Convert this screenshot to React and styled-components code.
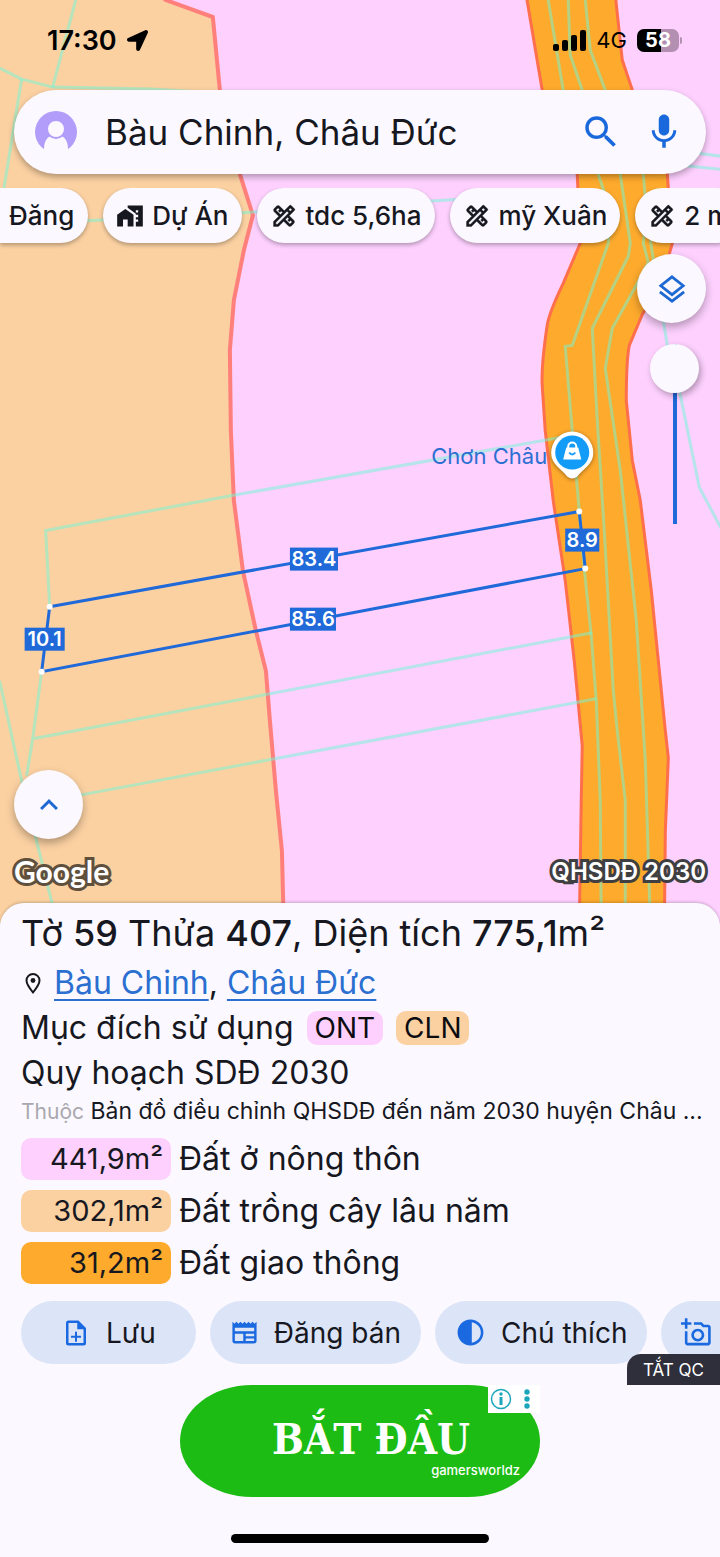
import React, { useState } from "react";
import styled, { createGlobalStyle } from "styled-components";
import { FaLocationArrow } from "react-icons/fa";
import {
  MdContrast,
  MdHomeWork,
  MdKeyboardArrowUp,
  MdMic,
  MdNewspaper,
  MdOutlineAddAPhoto,
  MdOutlineDesignServices,
  MdSearch,
} from "react-icons/md";

const DesignIcon = (props) => <MdOutlineDesignServices {...props} strokeWidth="0.3" />;

const chips = [
  { label: "Đăng", cut: true },
  { label: "Dự Án", icon: MdHomeWork },
  { label: "tdc 5,6ha", icon: DesignIcon },
  { label: "mỹ Xuân", icon: DesignIcon },
  { label: "2 m", icon: DesignIcon },
];

const zones = [
  { area: "441,9m²", name: "Đất ở nông thôn", color: "#fdd0fd" },
  { area: "302,1m²", name: "Đất trồng cây lâu năm", color: "#fbd1a2" },
  { area: "31,2m²", name: "Đất giao thông", color: "#fdaa2d" },
];

const edges = [
  { text: "83.4", x: 290, y: 547, w: 48 },
  { text: "85.6", x: 290, y: 607, w: 46 },
  { text: "8.9", x: 565, y: 528, w: 34 },
  { text: "10.1", x: 25, y: 627, w: 40 },
];

const corners = [
  [50, 606],
  [579, 511],
  [585, 568],
  [42, 671],
];

const FileAddIcon = () => (
  <svg width="30" height="30" viewBox="0 0 24 24" fill="currentColor" aria-hidden="true">
    <path d="M14 2H6a2 2 0 0 0-2 2v16a2 2 0 0 0 2 2h12a2 2 0 0 0 2-2V8zM6 20V4h7v5h5v11z" />
    <path d="M11.2 11h1.6v3.2H16v1.6h-3.2V19h-1.6v-3.2H8v-1.6h3.2z" />
  </svg>
);

const LayersIcon = () => (
  <svg width="28" height="30" viewBox="0 0 30 32" fill="none" stroke="currentColor" strokeWidth="3" aria-hidden="true">
    <path d="M15 3 27 12.500 15 22 3 12.500z" />
    <path d="M2 19 15 29 28 19" />
  </svg>
);

const PinIcon = () => (
  <svg width="24" height="24" viewBox="0 0 24 24" fill="none" stroke="currentColor" strokeWidth="2" aria-hidden="true">
    <path d="M12 21.500C8 16.500 5.500 13 5.500 9.500a6.500 6.500 0 0 1 13 0c0 3.500-2.500 7-6.500 12z" />
    <circle cx="12" cy="9.500" r="2.400" fill="currentColor" stroke="none" />
  </svg>
);

const AvatarIcon = () => (
  <svg width="42" height="42" viewBox="0 0 42 42" aria-hidden="true">
    <circle cx="21" cy="21" r="21" fill="#b29dfa" />
    <path d="M9 43V38c0-7 3-12 7-13h10c4 1 7 6 7 13v5z" fill="#fbf9ff" />
    <circle cx="21" cy="18" r="9" fill="#fbf9ff" stroke="#b29dfa" strokeWidth="2" />
  </svg>
);

const SignalIcon = () => (
  <svg width="33" height="21" viewBox="0 0 33 21" aria-hidden="true">
    <rect x="0" y="14" width="6" height="7" rx="2" />
    <rect x="9" y="10" width="6" height="11" rx="2" />
    <rect x="18" y="5" width="6" height="16" rx="2" />
    <rect x="27" y="0" width="6" height="21" rx="2" />
  </svg>
);

const PlanningMap = () => (
  <MapCanvas viewBox="0 0 720 922" preserveAspectRatio="xMidYMid slice">
    <rect width="720" height="922" fill="#fdd0fe" />
    <path
      d="M-5-5H160L166 0 213 17 220 90 240 174 253 215 244 250 234 300 230 350 231 430 234 500 243 570 256 630 266 670 270 720 276 790 282 850 284 930H-5z"
      fill="#fbd1a2"
      stroke="#ff7f7b"
      strokeWidth="4"
    />
    <path
      d="M526-5 542 90 577 174 580 243 563 283Q549 312 547 325 541 365 542 385L545 430 553 500 565 580 574 660 582 745 581 800 579 930H664L665 830 668 757 665 730 658 660 651 590 640 500 632 460 626 400Q626 360 629 345L642 314 660 285 672 243 667 174 632 90 622 60 615-5z"
      fill="#fdaa2d"
      stroke="#ff6f4c"
      strokeWidth="3"
    />
    <g fill="none" stroke="#70f8d8" strokeOpacity="0.500" strokeWidth="3">
      <path d="M548 0 563 90 598 174 610 210 608 243 572 345 565 346 572 430 579 510 584 568 591 635 596 700 600 800 601 922" />
      <path d="M568 0 570 55 582 90 620 174 630 243 628 256 592 328 597 420 604 530 613 690 617 730 625 800 625 922" />
      <path d="M585 0 590 50 605 90 643 174 646 210 643 243 648 262 636 285 612 328 605 368 620 470 636 620 645 760 650 922" />
      <path d="M650 240 667 345 680 395 699 487 722 530" />
      <path d="M690 152 720 156M680 165 720 169" />
      <path d="M0 68 22 79 53 87 150 89 260 95" />
      <path d="M76 0 53 87M22 79 4 190" />
      <path d="M0 225 250 212 460 199" />
      <path d="M50 606 46 530 232 495 560 437" />
      <path d="M42 671 33 738 27 775M33 738 592 632M60 798 596 698M0 680 22 780 53 905" />
    </g>
    <path d="M50 606 579 511 585 568 42 671z" fill="none" stroke="#1f69d9" strokeWidth="3" />
    {corners.map(([x, y]) => (
      <circle key={x} cx={x} cy={y} r="3" fill="#fff" />
    ))}
    {edges.map((edge) => (
      <g key={edge.text}>
        <rect x={edge.x} y={edge.y} width={edge.w} height="23" fill="#1f69d9" />
        <EdgeText x={edge.x + edge.w / 2} y={edge.y + 18}>
          {edge.text}
        </EdgeText>
      </g>
    ))}
    <PlaceText x="547" y="463">
      Chơn Châu
    </PlaceText>
    <PlacePin>
      <path d="M572 431a21 21 0 0 1 21 22c0 11-11 16-16 23q-5 4-10 0c-5-7-16-12-16-23a21 21 0 0 1 21-22z" fill="#fff" />
      <circle cx="572" cy="452" r="17" fill="#129bf7" />
      <path d="M566 447h12l3 12h-18z" fill="#fff" />
      <path d="M568 448v-2a4 4 0 0 1 8 0v2" fill="none" stroke="#fff" strokeWidth="2" />
      <path d="M569 452q3 4 6 0" fill="none" stroke="#129bf7" strokeWidth="2" />
    </PlacePin>
  </MapCanvas>
);

const App = () => {
  const [query, setQuery] = useState("Bàu Chinh, Châu Đức");
  const [opacity, setOpacity] = useState(100);

  return (
    <Page>
      <GlobalStyle />
      <MapArea>
        <PlanningMap />
        <MapOverlay>
          <StatusBar>
            <Clock>
              17:30 <FaLocationArrow size={21} />
            </Clock>
            <StatusIcons>
              <SignalIcon />
              <span>4G</span>
              <Battery>58</Battery>
            </StatusIcons>
          </StatusBar>

          <SearchBar>
            <IconButton aria-label="Tài khoản">
              <AvatarIcon />
            </IconButton>
            <SearchInput
              aria-label="Tìm kiếm"
              value={query}
              onChange={(e) => setQuery(e.target.value)}
            />
            <IconButton aria-label="Tìm">
              <MdSearch size={42} />
            </IconButton>
            <IconButton aria-label="Giọng nói">
              <MdMic size={42} />
            </IconButton>
          </SearchBar>

          <ChipRow>
            {chips.map(({ label, icon: Icon, cut }) => (
              <Chip key={label} $cut={cut}>
                {Icon && <Icon size={28} />}
                {label}
              </Chip>
            ))}
          </ChipRow>

          <MapTools>
            <RoundButton aria-label="Lớp bản đồ">
              <LayersIcon />
            </RoundButton>
            <OpacitySlider
              type="range"
              aria-label="Độ mờ"
              value={opacity}
              onChange={(e) => setOpacity(Number(e.target.value))}
            />
          </MapTools>

          <MapFooter>
            <RoundButton aria-label="Mở rộng">
              <MdKeyboardArrowUp size={36} />
            </RoundButton>
            <Credits>
              <GoogleMark>Google</GoogleMark>
              <PlanMark>QHSDĐ 2030</PlanMark>
            </Credits>
          </MapFooter>
        </MapOverlay>
      </MapArea>

      <Sheet>
        <Title>
          Tờ <b>59</b> Thửa <b>407</b>, Diện tích <b>775,1</b>m²
        </Title>
        <Line>
          <PinIcon />
          <span>
            <a href="#bau-chinh">Bàu Chinh</a>, <a href="#chau-duc">Châu Đức</a>
          </span>
        </Line>
        <Line>
          Mục đích sử dụng
          <Tag $color="#fdd0fd">ONT</Tag>
          <Tag $color="#fbd1a2">CLN</Tag>
        </Line>
        <Line>Quy hoạch SDĐ 2030</Line>
        <Source>
          <span>Thuộc</span> Bản đồ điều chỉnh QHSDĐ đến năm 2030 huyện Châu ...
        </Source>
        <ZoneList>
          {zones.map((zone) => (
            <Zone key={zone.name}>
              <Area $color={zone.color}>{zone.area}</Area>
              {zone.name}
            </Zone>
          ))}
        </ZoneList>
        <Actions>
          <Action $padding="0 40px">
            <FileAddIcon />
            Lưu
          </Action>
          <Action>
            <MdNewspaper size={29} />
            Đăng bán
          </Action>
          <Action>
            <MdContrast size={31} />
            Chú thích
          </Action>
          <Action $padding="0 120px 0 20px" aria-label="Thêm ảnh">
            <MdOutlineAddAPhoto size={31} />
          </Action>
        </Actions>
        <AdArea>
          <HideAds>TẮT QC</HideAds>
          <AdBox>
            <AdLink href="#ad">
              <AdTitle>BẮT ĐẦU</AdTitle>
              <AdSource>gamersworldz</AdSource>
            </AdLink>
            <AdChoices aria-label="Thông tin quảng cáo">
              <svg width="46" height="22" viewBox="0 0 46 22" fill="#1ba6bb">
                <circle cx="11" cy="11" r="9.500" fill="none" stroke="#1ba6bb" strokeWidth="1.500" />
                <path d="M9.500 9h3v8h-3z" />
                <circle cx="11" cy="6" r="1.700" />
                <circle cx="37" cy="4" r="2.700" />
                <circle cx="37" cy="11" r="2.700" />
                <circle cx="37" cy="18" r="2.700" />
              </svg>
            </AdChoices>
          </AdBox>
        </AdArea>
        <HomeIndicator />
      </Sheet>
    </Page>
  );
};

const GlobalStyle = createGlobalStyle`
  * {
    box-sizing: border-box;
  }
  body {
    margin: 0;
    background: #fbf9ff;
    color: #17181f;
    font-family: Inter, "Liberation Sans", sans-serif;
  }
  button {
    border: none;
    padding: 0;
    font-family: inherit;
    color: inherit;
    cursor: pointer;
  }
`;

const Page = styled.div`
  display: flex;
  flex-direction: column;
  min-height: 100vh;
  overflow: hidden;
`;

const MapArea = styled.main`
  flex: 1;
  display: grid;
  min-width: 0;
  position: relative;
`;

const MapCanvas = styled.svg`
  position: absolute;
  inset: 0;
  width: 100%;
  height: 100%;
`;

const EdgeText = styled.text`
  font-size: 20px;
  font-weight: 600;
  text-anchor: middle;
  fill: #fff;
`;

const PlaceText = styled.text`
  font-size: 22px;
  text-anchor: end;
  fill: #2b6fd1;
`;

const PlacePin = styled.g`
  filter: drop-shadow(0 1px 2px rgba(0, 0, 0, 0.4));
`;

const MapOverlay = styled.div`
  display: flex;
  flex-direction: column;
  min-width: 0;
  position: relative;
  padding-bottom: 34px;
`;

const StatusBar = styled.div`
  display: flex;
  justify-content: space-between;
  align-items: center;
  height: 80px;
  padding: 0 41px 0 47px;
  color: #000;
`;

const Clock = styled.div`
  display: flex;
  align-items: center;
  gap: 10px;
  font-size: 27px;
  font-weight: 600;
`;

const StatusIcons = styled.div`
  display: flex;
  align-items: center;
  gap: 10px;
  font-size: 22px;
`;

const Battery = styled.div`
  position: relative;
  width: 42px;
  height: 23px;
  border-radius: 7px;
  background: linear-gradient(90deg, #000 58%, #b38fb2 58%);
  color: #fff;
  font-size: 20px;
  font-weight: 700;
  line-height: 23px;
  text-align: center;

  &::after {
    content: "";
    position: absolute;
    top: 8px;
    right: -3px;
    width: 2px;
    height: 7px;
    border-radius: 0 2px 2px 0;
    background: #b38fb2;
  }
`;

const SearchBar = styled.div`
  display: flex;
  align-items: center;
  gap: 21px;
  height: 84px;
  margin: 10px 14px 14px;
  padding: 0 21px;
  border-radius: 42px;
  background: #fbf9ff;
  box-shadow: 0 3px 6px rgba(0, 0, 0, 0.3);
`;

const SearchInput = styled.input`
  flex: 1;
  min-width: 0;
  border: none;
  outline: none;
  padding: 0 0 0 7px;
  background: none;
  color: #17181f;
  font-family: inherit;
  font-size: 35px;
`;

const IconButton = styled.button`
  display: flex;
  background: none;
  color: #1a69dc;
`;

const ChipRow = styled.div`
  display: flex;
  gap: 15px;
  height: 66px;
  overflow: hidden;
`;

const Chip = styled.button`
  display: flex;
  flex: none;
  align-items: center;
  gap: 8px;
  height: 55px;
  padding: ${(props) => (props.$cut ? "0 14px 0 9px" : "0 13px")};
  border-radius: ${(props) => (props.$cut ? "0 28px 28px 0" : "28px")};
  background: #fbf9ff;
  box-shadow: 0 2px 4px rgba(0, 0, 0, 0.3);
  font-size: 26px;
  font-weight: 500;

  path[fill="none"] {
    stroke: none;
  }
`;

const MapTools = styled.div`
  display: flex;
  flex-direction: column;
  align-items: flex-end;
  gap: 21px;
  padding-right: 14px;
`;

const RoundButton = styled.button`
  display: flex;
  align-items: center;
  justify-content: center;
  width: 69px;
  height: 69px;
  border-radius: 50%;
  background: #fbf9ff;
  color: #1f69d3;
  box-shadow: 0 4px 8px rgba(0, 0, 0, 0.3);
`;

const OpacitySlider = styled.input`
  appearance: none;
  writing-mode: vertical-lr;
  direction: rtl;
  width: 49px;
  height: 180px;
  margin: 0 7px 0 0;
  background: none;

  &::-webkit-slider-runnable-track {
    width: 49px;
    background: linear-gradient(#1f69d9, #1f69d9) center / 4px 100% no-repeat;
  }

  &::-webkit-slider-thumb {
    appearance: none;
    width: 49px;
    height: 49px;
    border-radius: 50%;
    background: #fbf9ff;
    box-shadow: 2px 3px 6px rgba(0, 0, 0, 0.3);
  }
`;

const MapFooter = styled.div`
  display: flex;
  flex-direction: column;
  gap: 14px;
  margin-top: auto;
  padding: 0 14px;
`;

const Credits = styled.div`
  display: flex;
  justify-content: space-between;
  align-items: center;
  height: 36px;
  color: #fff;
  paint-order: stroke fill;
`;

const GoogleMark = styled.span`
  font-family: Lato, sans-serif;
  font-size: 30px;
  font-weight: 700;
  -webkit-text-stroke: 6px #5f4f3d;
`;

const PlanMark = styled.span`
  font-size: 24px;
  font-weight: 600;
  -webkit-text-stroke: 6px #3f3f42;
`;

const Sheet = styled.section`
  position: relative;
  display: flex;
  flex-direction: column;
  margin-top: -20px;
  padding: 6px 0 14px;
  border-radius: 24px 24px 0 0;
  background: #fbf9ff;
  box-shadow: 0 -1px 3px rgba(0, 0, 0, 0.2);
`;

const Title = styled.h1`
  margin: 0 0 3px;
  padding: 0 21px;
  font-size: 36px;
  font-weight: 400;
  line-height: 48px;
  white-space: nowrap;

  b {
    font-weight: 500;
  }
`;

const Line = styled.div`
  display: flex;
  align-items: center;
  gap: 13px;
  height: 45px;
  padding: 0 21px;
  font-size: 32px;
  white-space: nowrap;

  svg {
    margin-right: -4px;
  }

  a {
    color: #2b6fd1;
    text-decoration-thickness: 2px;
    text-underline-offset: 5px;
  }
`;

const Tag = styled.span`
  padding: 0 8px;
  border-radius: 10px;
  background: ${(props) => props.$color};
  color: #0b0b10;
  font-size: 28px;
  line-height: 34px;
`;

const Source = styled.p`
  margin: 0;
  padding: 0 8px 0 21px;
  overflow: hidden;
  font-size: 23px;
  line-height: 33px;
  text-overflow: ellipsis;
  white-space: nowrap;

  span {
    color: #a9a8ae;
    font-size: 21px;
  }
`;

const ZoneList = styled.ul`
  display: flex;
  flex-direction: column;
  gap: 10px;
  margin: 0;
  padding: 10px 21px 17px;
  list-style: none;
`;

const Zone = styled.li`
  display: flex;
  align-items: center;
  gap: 8px;
  font-size: 32px;
  line-height: 42px;
  white-space: nowrap;
`;

const Area = styled.span`
  width: 150px;
  padding-right: 8px;
  border-radius: 10px;
  background: ${(props) => props.$color};
  font-size: 29px;
  text-align: right;
`;

const Actions = styled.div`
  display: flex;
  gap: 14px;
  padding-left: 21px;
  overflow: hidden;
`;

const Action = styled.button`
  display: flex;
  flex: none;
  align-items: center;
  gap: 15px;
  height: 63px;
  padding: ${(props) => props.$padding || "0 20px"};
  border-radius: 32px;
  background: #dce4f8;
  font-size: 28px;

  svg {
    color: #1a69e0;
  }
`;

const AdArea = styled.div`
  position: relative;
  display: flex;
  justify-content: center;
  margin-top: 21px;
`;

const HideAds = styled.button`
  position: absolute;
  right: 0;
  bottom: 100%;
  width: 93px;
  height: 31px;
  border-radius: 14px 0 0 0;
  background: #2e2f3a;
  color: #fff;
  font-size: 17px;
`;

const AdBox = styled.div`
  position: relative;
  width: 360px;
`;

const AdLink = styled.a`
  display: flex;
  flex-direction: column;
  height: 112px;
  padding: 33px 20px 0;
  border-radius: 72px / 56px;
  background: #1dbc14;
  color: #fff;
  text-decoration: none;
`;

const AdTitle = styled.strong`
  padding-left: 22px;
  font-family: "DejaVu Serif Condensed", "DejaVu Serif", serif;
  font-size: 42px;
  line-height: 44px;
  text-align: center;
`;

const AdSource = styled.span`
  font-size: 13px;
  font-weight: 500;
  line-height: 16px;
  text-align: right;
`;

const AdChoices = styled.button`
  position: absolute;
  top: 0;
  right: 0;
  display: flex;
  padding: 3px 4px 3px 2px;
  background: #fff;
`;

const HomeIndicator = styled.div`
  align-self: center;
  width: 258px;
  height: 9px;
  margin-top: 37px;
  border-radius: 5px;
  background: #000;
`;

export default App;
